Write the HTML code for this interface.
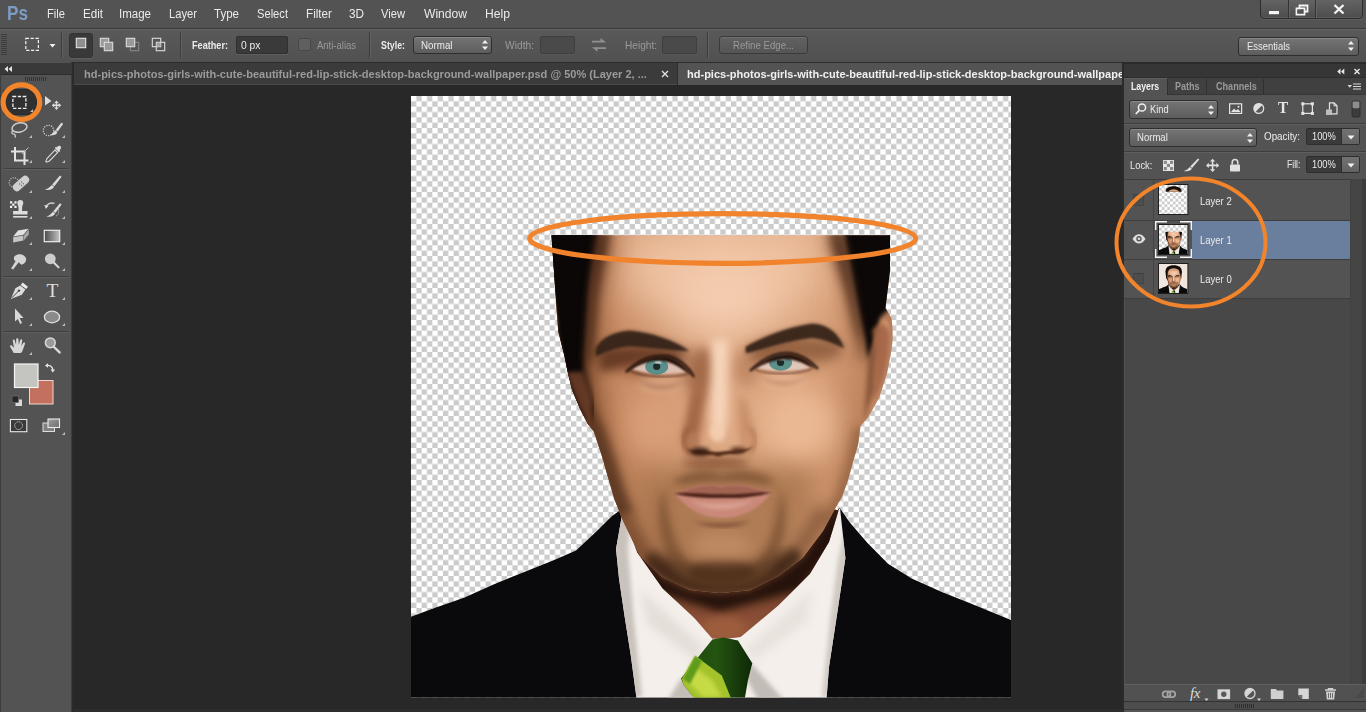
<!DOCTYPE html>
<html lang="en">
<head>
<meta charset="utf-8">
<title>Photoshop</title>
<style>
*{box-sizing:border-box;margin:0;padding:0}
html,body{width:1366px;height:712px;overflow:hidden;background:#282828}
body{position:relative;font-family:"Liberation Sans",sans-serif;font-size:12px;color:#e8e8e8}
.abs{position:absolute}
svg{position:absolute;overflow:visible}
.t{position:absolute;white-space:nowrap;line-height:1;transform-origin:0 50%}
#menubar{left:0;top:0;width:1366px;height:29px;background:#535353;border-bottom:1px solid #3a3a3a}
#optbar{left:0;top:29px;width:1366px;height:34px;background:linear-gradient(#595959,#515151);border-top:1px solid #646464;border-bottom:1px solid #2c2c2c}
#tabbar{left:74px;top:63px;width:1050px;height:22px;background:#3b3b3b;border-bottom:1px solid #4a4a4a}
#tools{left:0;top:62px;width:71px;height:650px;background:#535353}
#toolsedge{left:71px;top:62px;width:3px;height:650px;background:#2a2a2a;border-left:1.500px solid #3c3c3c}
#panel{left:1124px;top:64px;width:242px;height:648px;background:#535353}
.sel{position:absolute;border:1px solid #2e2e2e;border-radius:3px;background:linear-gradient(#747474,#5d5d5d);box-shadow:inset 0 1px 0 #8a8a8a}
.inp{position:absolute;background:#3a3a3a;border:1px solid #303030;border-radius:2px;box-shadow:0 1px 0 #5e5e5e}
.inpd{position:absolute;background:#4a4a4a;border:1px solid #3e3e3e;border-radius:2px;box-shadow:0 1px 0 #595959}
.vsep{position:absolute;width:1px;background:#3e3e3e;box-shadow:1px 0 0 #616161}
.hsep{position:absolute;height:1px;background:#3e3e3e;box-shadow:0 1px 0 #5f5f5f}
</style>
</head>
<body>

<div id="menubar" class="abs"></div>
<span class="t" style="left:7.0px;top:2.0px;font-size:21px;color:#7d9cc4;font-weight:bold;transform:scaleX(0.818);">Ps</span>
<span class="t" style="left:47.0px;top:8.3px;font-size:12.5px;color:#ebebeb;transform:scaleX(0.894);">File</span>
<span class="t" style="left:82.5px;top:8.3px;font-size:12.5px;color:#ebebeb;transform:scaleX(0.929);">Edit</span>
<span class="t" style="left:119.0px;top:8.3px;font-size:12.5px;color:#ebebeb;transform:scaleX(0.921);">Image</span>
<span class="t" style="left:169.0px;top:8.3px;font-size:12.5px;color:#ebebeb;transform:scaleX(0.896);">Layer</span>
<span class="t" style="left:214.0px;top:8.3px;font-size:12.5px;color:#ebebeb;transform:scaleX(0.923);">Type</span>
<span class="t" style="left:257.0px;top:8.3px;font-size:12.5px;color:#ebebeb;transform:scaleX(0.892);">Select</span>
<span class="t" style="left:306.0px;top:8.3px;font-size:12.5px;color:#ebebeb;transform:scaleX(0.936);">Filter</span>
<span class="t" style="left:349.0px;top:8.3px;font-size:12.5px;color:#ebebeb;transform:scaleX(0.939);">3D</span>
<span class="t" style="left:381.0px;top:8.3px;font-size:12.5px;color:#ebebeb;transform:scaleX(0.893);">View</span>
<span class="t" style="left:424.0px;top:8.3px;font-size:12.5px;color:#ebebeb;transform:scaleX(0.967);">Window</span>
<span class="t" style="left:485.0px;top:8.3px;font-size:12.5px;color:#ebebeb;transform:scaleX(0.973);">Help</span>
<div class="abs" style="left:1260px;top:-3px;width:103px;height:22px;border:1px solid #2c2c2c;border-radius:0 0 4px 4px;background:linear-gradient(#666,#4d4d4d);box-shadow:inset 0 -1px 0 #5c5c5c, 0 1px 0 #5e5e5e"></div>
<div class="abs" style="left:1288px;top:0;width:1px;height:18px;background:#333;box-shadow:1px 0 0 #666"></div>
<div class="abs" style="left:1315px;top:0;width:1px;height:18px;background:#333;box-shadow:1px 0 0 #666"></div>
<svg style="left:1260px;top:0" width="103" height="19" viewBox="1260 0 103 19"><rect x="1269" y="11" width="10" height="3.2" fill="#f4f4f4"/><path d="M1299.5 5.5h8v6h-8z M1296.5 8.5h8v6h-8z" fill="none" stroke="#f4f4f4" stroke-width="1.8"/><rect x="1297.4" y="9.4" width="6.2" height="4.2" fill="#555"/><path d="M1334.5 5 l9 8.5 M1343.5 5 l-9 8.5" stroke="#f4f4f4" stroke-width="2.3" fill="none"/></svg>
<div id="optbar" class="abs"></div>
<div class="abs" style="left:1px;top:34px;width:6px;height:22px;background:repeating-linear-gradient(#3c3c3c 0 1px,transparent 1px 2px)"></div>
<svg style="left:20px;top:32px" width="40" height="26" viewBox="20 32 40 26"><rect x="25.8" y="38.3" width="12.6" height="12" fill="none" stroke="#f2f2f2" stroke-width="1.2" stroke-dasharray="3.2 1.6"/><path d="M49.5 44 h6 l-3 3.4z" fill="#f2f2f2"/></svg>
<div class="vsep" style="left:61px;top:32px;height:26px"></div>
<div class="abs" style="left:69px;top:33px;width:24px;height:25px;background:#393939;border-radius:3px;border:1px solid #333;box-shadow:0 1px 0 #616161"></div>
<svg style="left:70px;top:32px" width="100" height="26" viewBox="70 32 100 26">
<rect x="76.3" y="38.3" width="9.4" height="9.4" fill="#8f8f8f" stroke="#e6e6e6" stroke-width="1.1"/>
<rect x="100.3" y="38.3" width="8.4" height="8.4" fill="#9a9a9a" stroke="#dcdcdc" stroke-width="1.1"/><rect x="104.3" y="42.3" width="8.4" height="8.4" fill="#9a9a9a" stroke="#dcdcdc" stroke-width="1.1"/>
<rect x="130.3" y="42.3" width="8.4" height="8.4" fill="none" stroke="#8a8a8a" stroke-width="1"/><rect x="126.3" y="38.3" width="8.4" height="8.4" fill="#9a9a9a" stroke="#dcdcdc" stroke-width="1.1"/>
<rect x="152.3" y="38.3" width="8.4" height="8.4" fill="none" stroke="#dcdcdc" stroke-width="1.1"/><rect x="156.3" y="42.3" width="8.4" height="8.4" fill="none" stroke="#dcdcdc" stroke-width="1.1"/><rect x="156.8" y="42.8" width="3.6" height="3.6" fill="#a0a0a0"/>
</svg>
<div class="vsep" style="left:180px;top:32px;height:26px"></div>
<span class="t" style="left:192.0px;top:39.5px;font-size:11px;color:#ebebeb;font-weight:bold;transform:scaleX(0.830);">Feather:</span>
<div class="inp" style="left:236px;top:36px;width:52px;height:18px"></div>
<span class="t" style="left:241.0px;top:40.0px;font-size:11px;color:#ebebeb;transform:scaleX(0.938);">0 px</span>
<div class="abs" style="left:298px;top:38px;width:13px;height:13px;background:#5f5f5f;border:1px solid #474747;border-radius:2px"></div>
<span class="t" style="left:317.0px;top:39.8px;font-size:10.5px;color:#9a9a9a;transform:scaleX(0.903);">Anti-alias</span>
<div class="vsep" style="left:369px;top:32px;height:26px"></div>
<span class="t" style="left:380.5px;top:39.5px;font-size:11px;color:#ebebeb;font-weight:bold;transform:scaleX(0.801);">Style:</span>
<div class="sel" style="left:413px;top:36px;width:79px;height:18px"></div>
<span class="t" style="left:420.5px;top:39.5px;font-size:11px;color:#ebebeb;transform:scaleX(0.889);">Normal</span>
<svg style="left:481px;top:38px" width="8" height="14" viewBox="0 0 8 14"><path d="M1 5.5 L4 2 L7 5.5z M1 8.5 L4 12 L7 8.5z" fill="#f0f0f0"/></svg>
<span class="t" style="left:505.0px;top:39.8px;font-size:10.5px;color:#9a9a9a;transform:scaleX(0.975);">Width:</span>
<div class="inpd" style="left:540px;top:36px;width:35px;height:18px"></div>
<svg style="left:590px;top:37px" width="18" height="16" viewBox="0 0 18 16"><path d="M2 3.800h8.500v-2.800l5.500 4.600h-14z M16 10.200h-14l5.500 4.600v-2.800h8.500z" fill="#909090"/></svg>
<span class="t" style="left:625.0px;top:39.8px;font-size:10.5px;color:#9a9a9a;transform:scaleX(0.962);">Height:</span>
<div class="inpd" style="left:662px;top:36px;width:35px;height:18px"></div>
<div class="vsep" style="left:707px;top:32px;height:26px"></div>
<div class="abs" style="left:719px;top:36px;width:89px;height:18px;border:1px solid #3b3b3b;border-radius:3px;background:linear-gradient(#616161,#555);box-shadow:inset 0 1px 0 #6e6e6e"></div>
<span class="t" style="left:733.0px;top:39.8px;font-size:10.5px;color:#9a9a9a;transform:scaleX(0.917);">Refine Edge...</span>
<div class="sel" style="left:1238px;top:36.5px;width:121px;height:19px"></div>
<span class="t" style="left:1246.5px;top:40.5px;font-size:11px;color:#ebebeb;transform:scaleX(0.858);">Essentials</span>
<svg style="left:1347px;top:39px" width="8" height="14" viewBox="0 0 8 14"><path d="M1 5.5 L4 2 L7 5.5z M1 8.5 L4 12 L7 8.5z" fill="#f0f0f0"/></svg>
<div id="tabbar" class="abs"></div>
<div class="abs" style="left:677px;top:63px;width:448px;height:22px;background:#535353;border-left:1px solid #2e2e2e"></div>
<span class="t" style="left:83.5px;top:68.5px;font-size:11.5px;color:#9b9b9b;font-weight:bold;transform:scaleX(0.958);">hd-pics-photos-girls-with-cute-beautiful-red-lip-stick-desktop-background-wallpaper.psd @ 50% (Layer 2, ...</span>
<svg style="left:661px;top:70px" width="8" height="8" viewBox="0 0 8 8"><path d="M1 1l6 6M7 1l-6 6" stroke="#e0e0e0" stroke-width="1.4"/></svg>
<div class="abs" style="left:686px;top:64px;width:437px;height:20px;overflow:hidden"><span class="t" style="left:1.0px;top:4.6px;font-size:11.5px;color:#f0f0f0;font-weight:bold;transform:scaleX(0.958);">hd-pics-photos-girls-with-cute-beautiful-red-lip-stick-desktop-background-wallpaper.psd @ 50% (Layer 1, RGB/8) *</span></div>
<div id="tools" class="abs"></div>
<div id="toolsedge" class="abs"></div>
<div class="abs" style="left:0;top:63px;width:72px;height:12px;background:#393939;border-bottom:1px solid #2d2d2d"></div>
<div class="abs" style="left:0;top:74px;width:1px;height:638px;background:#3c3c3c"></div>
<div class="abs" style="left:25px;top:77px;width:21px;height:4px;background:repeating-linear-gradient(90deg,#343434 0 1px,transparent 1px 2px)"></div>
<div class="abs" style="left:3px;top:89px;width:34px;height:26px;background:#303030;border-radius:3px;border:1px solid #2a2a2a"></div>
<div class="hsep" style="left:4px;top:168px;width:64px"></div>
<div class="hsep" style="left:4px;top:276px;width:64px"></div>
<div class="hsep" style="left:4px;top:331px;width:64px"></div>
<svg style="left:0;top:62px" width="74" height="650" viewBox="0 62 74 650">
<g fill="#dcdcdc" stroke="none">
<!-- collapse arrows -->
<path d="M8 66v6l-3.500-3z M12 66v6l-3.500-3z" fill="#e4e4e4"/>
<!-- corner triangles -->
<g fill="#bdbdbd">
<path d="M33 109v3h-3z"/><path d="M32 135v3h-3z M65 135v3h-3z M32 160v3h-3z M65 160v3h-3z"/>
<path d="M32 190v3h-3z M65 190v3h-3z M32 216v3h-3z M65 216v3h-3z M32 242v3h-3z M65 242v3h-3z M32 268v3h-3z M65 268v3h-3z"/>
<path d="M32 297v3h-3z M65 297v3h-3z M32 323v3h-3z M65 323v3h-3z M32 352v3h-3z M65 432v3h-3z"/>
</g>
<!-- marquee -->
<rect x="12.9" y="96.5" width="13" height="11.8" fill="none" stroke="#f0f0f0" stroke-width="1.3" stroke-dasharray="3.3 1.6"/>
<!-- move -->
<path d="M45 96l6.5 5-6.5 4.6z"/>
<path d="M56.5 100.5l2.2 2.4h-1.5v1.6h1.6v-1.5l2.4 2.2-2.4 2.2v-1.5h-1.6v1.6h1.5l-2.2 2.4-2.2-2.4h1.5v-1.6h-1.6v1.5l-2.4-2.2 2.4-2.2v1.5h1.6v-1.6h-1.5z"/>
<!-- lasso -->
<ellipse cx="19.5" cy="127.5" rx="7.6" ry="4.6" fill="none" stroke="#cfcfcf" stroke-width="1.5" transform="rotate(-12 19.5 127.5)"/>
<path d="M13.2 130.5c-1.5.6-2 2.4-.6 3.2 1.3.6 2.4 0 2.6 1.6l.2 2.2" fill="none" stroke="#cfcfcf" stroke-width="1.3"/>
<!-- quick select -->
<circle cx="48.5" cy="130.5" r="5.2" fill="none" stroke="#d4d4d4" stroke-width="1.2" stroke-dasharray="1.2 1.2"/>
<path d="M61.5 122.5l1.6 1.4-5.4 7.6-2-1.6z"/><path d="M55.3 130.3l2 1.7c-.6 2.6-3.6 3.8-7.3 3 2.4-.9 3.6-2.6 5.3-4.700z"/>
<!-- crop -->
<path d="M15 147v13.500h13.500" fill="none" stroke="#e2e2e2" stroke-width="2"/><path d="M11 151.500h13.500v13.500" fill="none" stroke="#e2e2e2" stroke-width="2"/><path d="M22 154l6.500-6.500" stroke="#bdbdbd" stroke-width="1"/>
<!-- eyedropper -->
<path d="M57.500 146.500c1.400-1.400 3.400-.6 3.600.8.200 1.200-.6 2-1.600 2.800l.8.800-1.400 1.400-4.200-4.200 1.400-1.400.8.800z"/><path d="M55 150l2.600 2.600-8.200 8.400-2.800 1.200-.8-.8 1.200-2.800z" fill="none" stroke="#dcdcdc" stroke-width="1.100"/>
<!-- healing -->
<circle cx="14" cy="182.500" r="4.800" fill="none" stroke="#c8c8c8" stroke-width="1.100" stroke-dasharray="1.100 1.200"/>
<rect x="11.500" y="179.500" width="19" height="8" rx="3.800" transform="rotate(-42 21 183.500)" fill="#cfcfcf"/>
<g fill="#6a6a6a"><circle cx="19.500" cy="184" r=".7"/><circle cx="21.500" cy="182" r=".7"/><circle cx="21.500" cy="185.500" r=".7"/><circle cx="23.300" cy="183.700" r=".7"/></g>
<!-- brush -->
<path d="M60 175.500l1.600 1.200-7.200 9.600-2.200-1.700z"/><path d="M51.800 185l2.300 1.800c-.8 2.700-4.600 3.600-9.600 2.800 3.200-.7 4.800-2.200 7.300-4.600z"/>
<g transform="translate(0,3.8)">
<!-- stamp -->
<path d="M10 197.500h2.200v2.200h-2.200z M14.400 197.500h2.200v2.200h-2.200z M12.200 199.700h2.200v2.200h-2.200z M10 201.900h2.200v2.200h-2.200z M14.400 201.900h2.200v2.200h-2.200z" fill="#f2f2f2"/>
<path d="M20.300 196.300a3 3 0 0 1 3 3c0 1.600-1.200 2.600-1.200 4.600v3.300h5.400v3.600h-14.400v-3.600h5.400v-3.300c0-2-1.200-3-1.200-4.600a3 3 0 0 1 3-3z"/><rect x="13.100" y="212.200" width="14.400" height="1.600"/>
<!-- history brush -->
<path d="M60 199.500l1.600 1.200-6.200 8.600-2.200-1.700z"/><path d="M52.800 208l2.300 1.800c-.8 2.700-4.600 3.600-8.600 2.800 3-.7 4.200-2.200 6.300-4.600z"/>
<path d="M46 203.500c.8-3.200 4.600-5.400 8.400-3.800" fill="none" stroke="#d0d0d0" stroke-width="1.500"/><path d="M44.300 201.300l4.200.6-2.600 3.400z"/>
<path d="M58 205.500c1.200 2.400.6 5-1.600 6.800" fill="none" stroke="#c0c0c0" stroke-width="1.100" stroke-dasharray="1.100 1.100"/>
</g>
<g transform="translate(0,2)">
<!-- eraser -->
<path d="M18 228.500l10.600-1.800-5.200 6-10.200 1.800z" fill="#e2e2e2"/><path d="M13.200 235.200l10.200-1.800v5.200l-10.200 2z" fill="#c6c6c6"/><path d="M24 233.200l4.800-5.800v5l-4.800 5.800z" fill="#a8a8a8"/>
</g>
<!-- gradient -->
<defs><linearGradient id="tg" x1="0" x2="1"><stop offset="0" stop-color="#4a4a4a"/><stop offset="1" stop-color="#c4c4c4"/></linearGradient>
<linearGradient id="sm" x1="0" x2="1" y1="0" y2="1"><stop offset="0" stop-color="#a0a0a0"/><stop offset="1" stop-color="#6c6c6c"/></linearGradient></defs>
<rect x="44.300" y="230.300" width="15.400" height="11.400" fill="url(#tg)" stroke="#ececec" stroke-width="1.200"/>
<g transform="translate(0,1.8)">
<!-- smudge -->
<path d="M14.500 254.500c3-3.400 9.200-2.600 11.200 1.200 1.400 3.200-.6 6.600-4.400 7.200l-2.600-2.400-5.600 7.200-2-1 4.600-7.400c-2-.8-2.400-3-1.200-4.800z" fill="#d4d4d4"/>
<!-- dodge -->
<circle cx="50.300" cy="257" r="5.400" fill="#cdcdcd"/><path d="M53.500 260.500l5.600 5.600" stroke="#dcdcdc" stroke-width="2"/>
</g>
<!-- pen -->
<path d="M22.600 282.500l5.400 4.200-1.800 2.400-5.400-4.200z" fill="#ececec"/><path d="M20.200 285.500l5.200 4-3.600 5.200-11 4.200 4.600-10.600z"/><path d="M11.600 298l7-7" stroke="#4a4a4a" stroke-width="1"/><circle cx="19" cy="290.600" r="1.200" fill="#4a4a4a"/>
<text x="52.400" y="297" font-family="Liberation Serif, serif" font-size="19.500" text-anchor="middle" fill="#dedede">T</text>
<!-- path select arrow -->
<path d="M15 308.500l8.600 9.400-4 .2 2.400 5-1.800.8-2.400-5-2.800 2.600z" fill="#d8d8d8"/>
<!-- ellipse -->
<ellipse cx="52" cy="317" rx="7.600" ry="5.800" fill="#8a8a8a" stroke="#e0e0e0" stroke-width="1.300"/>
<!-- hand -->
<path d="M13.800 353l-3.600-6c-.8-1.400.8-2.200 1.800-1.200l2 2-1.200-7c-.2-1.400 1.600-1.600 2-.4l1.200 4.400.2-5.600c0-1.400 2-1.400 2.200 0l.4 5.400 1.400-4.600c.4-1.200 2.200-.8 2 .6l-.8 5.400 1.800-3c.6-1 2.200-.4 1.800.8l-2.400 6.800c-.6 1.600-1.200 2-1.800 2.400z" fill="#d6d6d6"/>
<!-- zoom -->
<circle cx="50.300" cy="342.800" r="4.900" fill="#9a9a9a" stroke="#dadada" stroke-width="1.500"/><path d="M54 347l5.600 5.400" stroke="#dcdcdc" stroke-width="2.400" stroke-linecap="round"/>
<!-- swatches -->
<rect x="29.500" y="380.500" width="23.500" height="23.500" fill="#c4705e" stroke="#f0d8d0" stroke-width="1"/>
<rect x="14.500" y="364" width="23.500" height="23.500" fill="#c4c5c0" stroke="#f6f6f6" stroke-width="1.200"/>
<path d="M47 365.500c3.400-.4 5.800 1.600 5.800 4.800" fill="none" stroke="#e6e6e6" stroke-width="1.300"/><path d="M45 365.500l3-2.200v4.400z M52.800 372.500l-2.200-3h4.400z" fill="#e6e6e6"/>
<rect x="15.500" y="399.500" width="6.500" height="6.500" fill="#d8d8d8"/><rect x="12" y="396" width="6.500" height="6.500" fill="#262626" stroke="#6a6a6a" stroke-width=".8"/>
<!-- quick mask -->
<rect x="10.400" y="419.500" width="16.400" height="12.200" fill="#3a3a3a" stroke="#e8e8e8" stroke-width="1.100"/><circle cx="18.600" cy="425.600" r="3.900" fill="none" stroke="#e8e8e8" stroke-width="1" stroke-dasharray="1 1"/>
<!-- screen mode -->
<rect x="43" y="423" width="11.500" height="8.500" fill="#808080" stroke="#dedede" stroke-width="1"/><rect x="48" y="419" width="11.500" height="8.500" fill="url(#sm)" stroke="#ececec" stroke-width="1.100"/>
</g>
</svg>

<svg style="left:411px;top:96px" width="600" height="602" viewBox="411 96 600 602">
<defs>
<pattern id="chk" x="411" y="96" width="10.6667" height="10.6667" patternUnits="userSpaceOnUse"><rect width="10.6667" height="10.6667" fill="#fff"/><rect x="5.3333" y="0" width="5.3334" height="5.3333" fill="#cbcbcb"/><rect x="0" y="5.3333" width="5.3333" height="5.3334" fill="#cbcbcb"/></pattern>
<clipPath id="cv"><rect x="411" y="96" width="600" height="601.500"/></clipPath>
<filter id="b1" color-interpolation-filters="sRGB" x="-20%" y="-20%" width="140%" height="140%"><feGaussianBlur stdDeviation="1"/></filter>
<filter id="b2" color-interpolation-filters="sRGB" x="-30%" y="-30%" width="160%" height="160%"><feGaussianBlur stdDeviation="2.2"/></filter>
<filter id="b4" color-interpolation-filters="sRGB" x="-40%" y="-40%" width="180%" height="180%"><feGaussianBlur stdDeviation="4"/></filter>
<filter id="b7" color-interpolation-filters="sRGB" x="-50%" y="-50%" width="200%" height="200%"><feGaussianBlur stdDeviation="7"/></filter>
<filter id="b12" color-interpolation-filters="sRGB" x="-60%" y="-60%" width="220%" height="220%"><feGaussianBlur stdDeviation="12"/></filter>
<filter id="b20" color-interpolation-filters="sRGB" x="-80%" y="-80%" width="260%" height="260%"><feGaussianBlur stdDeviation="20"/></filter>
<path id="head" d="M551.5 235.300L890 235.300L890 271L885.500 308L891.500 318C893 330 893 340 891.500 349L887 373.500L879 398L868.300 417L860.500 426L858 445L853 462L848 480L842 497L836.500 506L823 531L802.600 558L779 575.500L749.500 590.300L720 593L690 590L662 577L640 556L623 521L614 498L607.700 476.300L601.500 454.700L593.800 431.500L587.600 423.700L579.800 408.300L572 389.700L567.500 371L564.400 355.700L558.200 331L556 300L553 257Z"/>
<clipPath id="hc"><use href="#head"/></clipPath>
<path id="shirt" d="M622 515L616 549L619 578.500L624.700 617L630.700 655L636.600 699L826.500 699L829 667L838 608L845.400 558L840 508L800 560L660 560Z"/>
<clipPath id="sc"><use href="#shirt"/></clipPath>
<path id="neckp" d="M624.700 519L637.400 552.700L662.700 588.500L694.300 618L712.300 638.500L723.700 639L740.600 637L778.600 605.300L810 573.700L829 542L838.600 510.500L800 500L660 500Z"/>
<clipPath id="nc"><use href="#neckp"/></clipPath>
<linearGradient id="skin" x1="0" x2="1" y1="0" y2="0"><stop offset="0" stop-color="#9a6240"/><stop offset=".2" stop-color="#c88c64"/><stop offset=".5" stop-color="#e2ae8a"/><stop offset=".8" stop-color="#d79f78"/><stop offset="1" stop-color="#b27852"/></linearGradient>
<linearGradient id="tie" x1="0" x2="1" y1="0" y2="0"><stop offset="0" stop-color="#1e480e"/><stop offset=".5" stop-color="#245410"/><stop offset="1" stop-color="#0e2806"/></linearGradient>
<linearGradient id="neck" x1="0" x2="0" y1="0" y2="1"><stop offset="0" stop-color="#3a1e12"/><stop offset=".5" stop-color="#6a3824"/><stop offset="1" stop-color="#96583c"/></linearGradient>
</defs>
<rect x="411" y="96" width="600" height="601.500" fill="url(#chk)"/>
<g id="portrait" clip-path="url(#cv)">
<path d="M621.800 509L611.500 516.500L596.700 531.300L576 550.500L552.500 560.800L523 572.600L493.500 584.400L464 597.700L434.500 608L411 616.800L411 699L1011 699L1011 620L970.700 603.600L941.200 591.800L911.700 578.500L888 563.700L867.500 543L849.800 522.400L839.500 507.700L800 560L650 560Z" fill="#0a090c"/>
<use href="#shirt" fill="#f4efeb"/>
<g clip-path="url(#sc)">
<path d="M614 515L614 549L616 580L622 620L630 665L634 697L642 697L634 620L628 550L630 520Z" fill="#c9c2bc" filter="url(#b2)"/>
<path d="M848 515L848 558L842 608L832 670L828 697L822 697L830 620L838 560Z" fill="#cfc8c2" filter="url(#b2)"/>
<path d="M680 680L668 700L704 700L692 676Z" fill="#c4beb8" filter="url(#b2)"/>
<path d="M750 662L784 700L758 700L746 678Z" fill="#c2bcb6" filter="url(#b2)"/>
<path d="M640 590L705 648L695 660L648 625Z" fill="#e4ded8" filter="url(#b4)"/>
<path d="M812 590L745 650L755 660L806 622Z" fill="#e8e2dc" filter="url(#b4)"/>
</g>
<use href="#neckp" fill="url(#neck)"/>
<g clip-path="url(#nc)">
<path d="M624 515L640 556L662 577L690 590L720 593L750 590L779 575L803 558L838 506L838 540L800 590L720 612L650 590L620 540Z" fill="#1c0e08" filter="url(#b4)" opacity=".9"/>
<ellipse cx="724" cy="628" rx="22" ry="12" fill="#a0603f" filter="url(#b4)" opacity=".8"/>
</g>
<path d="M712.300 639.500L723.500 637.500L738 640.400L752.300 663.300L748 680L744.700 699L695 699L683.700 685L681 678.500Z" fill="url(#tie)"/>
<path d="M695.200 655.700L721.800 675.600L731.300 699L695 699L683.700 685L681.800 679Z" fill="#a4c22a"/>
<path d="M690 664L712 680L722 697L703 697L688 682Z" fill="#c6da46" filter="url(#b2)"/>
<path d="M683 679L695.200 655.700L702 661L690 684Z" fill="#5e9a1c" filter="url(#b1)"/>
<use href="#head" fill="url(#skin)"/>
<g clip-path="url(#hc)">
<rect x="620" y="225" width="200" height="80" fill="#f0c4a4" filter="url(#b20)" opacity=".9"/>
<ellipse cx="722" cy="300" rx="60" ry="36" fill="#f6d2b6" filter="url(#b20)" opacity=".8"/>
<rect x="590" y="460" width="270" height="160" fill="#b98258" filter="url(#b20)" opacity=".4"/>
<ellipse cx="652" cy="425" rx="26" ry="28" fill="#dba27c" filter="url(#b12)" opacity=".8"/>
<ellipse cx="798" cy="425" rx="36" ry="36" fill="#ecba96" filter="url(#b12)" opacity=".95"/>
<path d="M545 235L612 235L596 300L592 370L604 430L630 520L665 580L600 560L540 400Z" fill="#7e4a2c" filter="url(#b12)" opacity=".85"/>
<path d="M545 235L604 235L590 300L586 370L590 420L560 400Z" fill="#3a2014" filter="url(#b7)" opacity=".8"/>
<path d="M846 360L866 420L850 480L830 530L790 575L850 540L880 440Z" fill="#95603e" filter="url(#b12)" opacity=".7"/>
<path d="M826 235L850 235L862 300L870 360L860 360L848 300Z" fill="#6a4028" filter="url(#b7)" opacity=".75"/>
<ellipse cx="640" cy="358" rx="46" ry="15" fill="#80492f" filter="url(#b7)" opacity=".9"/>
<path d="M600 352C620 346 660 350 688 354C680 362 660 358 640 360C620 364 606 372 600 372Z" fill="#5a3420" filter="url(#b4)" opacity=".75"/>
<path d="M750 352C780 342 815 338 842 348C838 358 820 352 800 352C780 354 764 360 752 364Z" fill="#6e442c" filter="url(#b4)" opacity=".65"/>
<ellipse cx="795" cy="352" rx="46" ry="14" fill="#94603f" filter="url(#b7)" opacity=".85"/>
<ellipse cx="698" cy="372" rx="14" ry="24" fill="#9a6242" filter="url(#b7)" opacity=".8"/>
<ellipse cx="746" cy="368" rx="12" ry="20" fill="#b07552" filter="url(#b7)" opacity=".65"/>
<ellipse cx="660" cy="385" rx="22" ry="7" fill="#dea888" filter="url(#b4)" opacity=".7"/>
<ellipse cx="785" cy="381" rx="22" ry="7" fill="#e8b696" filter="url(#b4)" opacity=".7"/>
<path d="M712 340L728 340L727 420L722 440L714 440L711 420Z" fill="#f8d9c0" filter="url(#b4)" opacity=".9"/>
<path d="M692 395L703 390L700 430L688 452L682 440Z" fill="#9c6040" filter="url(#b4)" opacity=".85"/>
<path d="M738 395L746 400L756 440L748 452L740 430Z" fill="#bb805a" filter="url(#b4)" opacity=".7"/>
<path d="M700 350L708 350L704 400L696 430L686 440L690 410Z" fill="#a06644" filter="url(#b4)" opacity=".7"/>
<ellipse cx="692" cy="442" rx="8" ry="10" fill="#b47a56" filter="url(#b2)" opacity=".8"/>
<ellipse cx="748" cy="441" rx="7" ry="10" fill="#cf9670" filter="url(#b2)" opacity=".8"/>
<ellipse cx="717" cy="432" rx="7" ry="9" fill="#f4cdb0" filter="url(#b2)" opacity=".9"/>
<path d="M688 428C682 436 682 448 690 455" fill="none" stroke="#8a5236" stroke-width="3" filter="url(#b2)" opacity=".8"/>
<path d="M750 428C757 436 757 447 749 454" fill="none" stroke="#a8704c" stroke-width="2.500" filter="url(#b2)" opacity=".8"/>
<path d="M686 448C695 458 708 452 718 457C730 452 745 456 753 446C745 452 730 450 718 452C706 450 695 454 686 448Z" fill="#4a2616" filter="url(#b1)"/>
<ellipse cx="700" cy="452" rx="10" ry="4.500" fill="#32180e" filter="url(#b2)" opacity=".95"/>
<ellipse cx="738" cy="450.500" rx="8" ry="3.500" fill="#4a2616" filter="url(#b2)" opacity=".85"/>
<ellipse cx="716" cy="463" rx="34" ry="6" fill="#7e4a2e" filter="url(#b4)" opacity=".8"/>
<path d="M640 470C660 470 690 468 722 470C750 468 790 466 812 470C815 510 800 550 770 578C745 592 700 593 672 580C645 556 630 510 640 470Z" fill="#96643e" filter="url(#b12)" opacity=".55"/>
<path d="M672 482C690 470 705 468 722 474C740 468 760 470 775 482C770 488 760 480 722 482C690 480 680 488 672 482Z" fill="#6e4628" filter="url(#b4)" opacity=".75"/>
<path d="M648 556C660 570 668 575 680 581C704 592 742 593 766 579C778 572 788 564 798 552" fill="none" stroke="#1e100a" stroke-width="13" filter="url(#b4)" opacity=".9"/>
<path d="M622 510C636 548 652 566 675 578C700 592 742 593 768 578C792 562 808 540 824 508" fill="none" stroke="#6a4228" stroke-width="16" filter="url(#b7)" opacity=".6"/>
<path d="M660 560C690 582 750 584 786 556" fill="none" stroke="#3a2214" stroke-width="14" filter="url(#b7)" opacity=".8"/>
<path d="M664 488C668 520 676 548 690 566C710 580 735 580 755 566C770 548 778 520 780 488C790 510 786 550 768 574C745 590 700 590 678 574C658 550 654 510 664 488Z" fill="#6a4428" filter="url(#b4)" opacity=".6"/>
<ellipse cx="722" cy="572" rx="34" ry="12" fill="#4a2c18" filter="url(#b4)" opacity=".7"/>
<ellipse cx="722" cy="545" rx="30" ry="12" fill="#c4906a" filter="url(#b7)" opacity=".7"/>
<path d="M675 494C695 486 710 483 722 487C734 483 750 486 771 493C757 512 738 518 722 518C705 518 690 512 675 494Z" fill="#c98878" filter="url(#b1)"/>
<path d="M675 494C695 486 710 483 722 487C734 483 750 486 771 493C750 496 700 497 675 494Z" fill="#9c5e4c" filter="url(#b1)" opacity=".85"/>
<path d="M690 500C705 512 740 512 756 498C745 506 700 506 690 500Z" fill="#e0aa9c" filter="url(#b2)"/>
<path d="M674 493.500C695 492 708 495 722 494C738 495 752 492 772 492.500C752 497.500 738 498.500 722 498C706 498.500 692 497.500 674 493.500Z" fill="#4a2218" filter="url(#b1)"/>
<path d="M692 521C710 529 736 529 752 520C740 525 705 525 692 521Z" fill="#70422c" filter="url(#b2)"/>
<path d="M596 350C600 338 615 332 630 331C652 333 672 340 689 351C670 350 650 347 630 346C615 347 604 352 596 356Z" fill="#33221a" filter="url(#b1)" opacity=".9"/>
<path d="M596 350C600 338 615 332 630 331C652 333 672 340 689 351C670 350 650 347 630 346C615 347 604 352 596 356Z" fill="#3a261a" filter="url(#b2)" opacity=".7"/>
<path d="M746 347C765 336 790 327 812 324C827 324 838 333 844 348C834 343 825 339 812 337.500C790 340 768 347 746 353Z" fill="#38261c" filter="url(#b1)" opacity=".9"/>
<path d="M746 347C765 336 790 327 812 324C827 324 838 333 844 348C834 343 825 339 812 337.500C790 340 768 347 746 353Z" fill="#3a261a" filter="url(#b2)" opacity=".7"/>
<path d="M632 369C642 360 655 357 668 360C676 363 682 368 686 372C675 374 650 376 632 369Z" fill="#dcc0b2" filter="url(#b1)"/>
<path d="M757 368C765 360 776 356 790 357C800 359 806 364 810 368C795 372 772 372 757 368Z" fill="#e2c6b8" filter="url(#b1)"/>
<ellipse cx="656.700" cy="366.500" rx="11.500" ry="8.200" fill="#5a8e8a"/><circle cx="656.700" cy="366.500" r="3.600" fill="#1c2a2a"/>
<ellipse cx="780.500" cy="362.500" rx="11.500" ry="8.200" fill="#5c918a"/><circle cx="780.500" cy="362.500" r="3.600" fill="#1c2a2a"/>
<rect x="655" y="361" width="6" height="2.400" fill="#fff" filter="url(#b1)"/><rect x="779" y="357.500" width="6" height="2.400" fill="#fff" filter="url(#b1)"/>
<path d="M626 372C640 360 652 355 668 357C678 360 686 366 692 376C680 367 672 362 662 361C650 360 640 364 626 372Z" fill="#26140c" filter="url(#b1)"/>
<path d="M751 371C762 360 775 353 790 354C802 356 810 362 816 369C805 364 798 360 788 359.500C776 359 764 363 751 371Z" fill="#2a160e" filter="url(#b1)"/>
<path d="M630 371C645 378 672 378 688 374" fill="none" stroke="#5a3424" stroke-width="1.600" filter="url(#b1)" opacity=".8"/>
<path d="M755 370C770 375 795 375 812 369" fill="none" stroke="#6a4030" stroke-width="1.600" filter="url(#b1)" opacity=".8"/>
<path d="M626 372C640 359 652 354 668 356C680 359 688 366 694 377" fill="none" stroke="#2a160e" stroke-width="2.400" filter="url(#b1)"/>
<path d="M750 371C762 359 775 352 790 353C803 355 811 361 818 369" fill="none" stroke="#2e1a12" stroke-width="2.400" filter="url(#b1)"/>
<path d="M636 378C650 388 672 388 686 380C672 392 648 392 636 378Z" fill="#a06c50" filter="url(#b2)" opacity=".8"/>
<path d="M760 376C775 384 795 384 808 376C795 388 772 388 760 376Z" fill="#b07a5e" filter="url(#b2)" opacity=".7"/>
<path d="M566 372L580 408L594 432L602 455L610 480L622 515" fill="none" stroke="#50301c" stroke-width="22" filter="url(#b4)" opacity=".75"/>
<path d="M566 330L572 372L580 398L586 410" fill="none" stroke="#160d09" stroke-width="20" stroke-linecap="round" filter="url(#b4)" opacity=".9"/>
<path d="M860 428L853 462L842 497L826 526" fill="none" stroke="#8a5a3c" stroke-width="14" filter="url(#b4)" opacity=".55"/>
<path d="M545 230L600 230C592 260 589 280 588 300L586 331L583 362L578 388L566 372L556 300Z" fill="#0d0908" filter="url(#b2)"/>
<path d="M545 230L594 230C586 262 584 280 582 300L580 331L577 360L570 374L556 300Z" fill="#0a0706" filter="url(#b1)"/>
<path d="M596 230L612 230C602 262 598 290 596 320L592 360L584 362L588 300Z" fill="#4a2a1a" filter="url(#b4)" opacity=".75"/>
<path d="M843 230L895 230L895 271L890 308L880 318L868.300 360L865 340L860 317.800L854 287L848 256Z" fill="#0c0807" filter="url(#b2)"/>
<path d="M828 230L844 230L852 270L860 318L866 350L856 330L846 290L838 262Z" fill="#4a2c1c" filter="url(#b4)" opacity=".7"/>
<path d="M882 320C890 318 892 330 891 349L886 374L878 398L868 416C876 392 880 360 882 320Z" fill="#d69c7a" filter="url(#b2)" opacity=".85"/>
<path d="M872 330C880 322 888 322 890 335C890 360 884 385 872 405C876 380 878 350 872 330Z" fill="#a06244" filter="url(#b2)" opacity=".85"/>
<path d="M868 360L876 340L874 390L864 420Z" fill="#7a4830" filter="url(#b2)" opacity=".7"/>
<path d="M566 372L580 408L592 430L592 400L582 372Z" fill="#70402a" filter="url(#b2)" opacity=".85"/>
</g>
</g>
<ellipse cx="722.700" cy="238.500" rx="193" ry="24.800" fill="none" stroke="#f0832c" stroke-width="5.200"/>
</svg>

<div id="panel" class="abs"></div>
<div class="abs" style="left:1122px;top:63px;width:2px;height:649px;background:#2b2b2b"></div>
<div class="abs" style="left:1124px;top:63px;width:242px;height:15px;background:#363636;border-top:1px solid #2a2a2a;border-bottom:1px solid #2d2d2d"></div>
<div class="abs" style="left:1124px;top:78px;width:242px;height:17px;background:#404040;border-bottom:1px solid #363636"></div>
<div class="abs" style="left:1124px;top:78px;width:44px;height:17px;background:#535353;border-right:1px solid #2f2f2f;border-top:1px solid #5f5f5f"></div>
<div class="abs" style="left:1206px;top:79px;width:1px;height:15px;background:#303030"></div>
<div class="abs" style="left:1263px;top:79px;width:1px;height:15px;background:#303030"></div>
<span class="t" style="left:1131.3px;top:81.2px;font-size:10.5px;color:#f2f2f2;font-weight:bold;transform:scaleX(0.833);">Layers</span>
<span class="t" style="left:1174.5px;top:81.2px;font-size:10.5px;color:#9a9a9a;font-weight:bold;transform:scaleX(0.860);">Paths</span>
<span class="t" style="left:1215.5px;top:81.2px;font-size:10.5px;color:#9a9a9a;font-weight:bold;transform:scaleX(0.865);">Channels</span>
<svg style="left:1330px;top:64px" width="36" height="32" viewBox="1330 64 36 32">
<path d="M1340.500 68.500v6l-3.300-3z M1344.300 68.500v6l-3.300-3z" fill="#e8e8e8"/>
<path d="M1354.500 69l5 5M1359.500 69l-5 5" stroke="#e8e8e8" stroke-width="1.400"/>
<path d="M1347.500 85h4.600l-2.300 2.800z" fill="#d8d8d8"/><path d="M1353 84h8M1353 86.500h8M1353 89h8" stroke="#d8d8d8" stroke-width="1.100"/>
</svg>
<div class="sel" style="left:1128.500px;top:100px;width:89px;height:19px"></div>
<svg style="left:1134px;top:102px" width="14" height="14" viewBox="0 0 14 14"><circle cx="8" cy="5.500" r="3.600" fill="none" stroke="#f0f0f0" stroke-width="1.500"/><path d="M5.400 8.200l-3.600 3.800" stroke="#f0f0f0" stroke-width="1.800"/></svg>
<span class="t" style="left:1150.4px;top:104.0px;font-size:11px;color:#ebebeb;transform:scaleX(0.845);">Kind</span>
<svg style="left:1207px;top:102.500px" width="8" height="14" viewBox="0 0 8 14"><path d="M1 5.500 L4 2 L7 5.500z M1 8.500 L4 12 L7 8.500z" fill="#f0f0f0"/></svg>
<svg style="left:1224px;top:98px" width="142" height="24" viewBox="1224 98 142 24">
<rect x="1229.600" y="103.800" width="12" height="9.600" fill="none" stroke="#e4e4e4" stroke-width="1.200"/><path d="M1231 112l3-3.600 2 2 2-1.400 2.600 3z" fill="#e4e4e4"/><circle cx="1238.500" cy="106.800" r="1" fill="#e4e4e4"/>
<circle cx="1258.800" cy="108.500" r="4.900" fill="#5a5a5a" stroke="#e0e0e0" stroke-width="1.200"/><path d="M1262.300 105a4.900 4.900 0 0 0-7 7z" fill="#e0e0e0"/>
<rect x="1302.800" y="103.800" width="9.600" height="9.600" fill="none" stroke="#e4e4e4" stroke-width="1.200"/><g fill="#e4e4e4"><rect x="1301.300" y="102.300" width="3" height="3"/><rect x="1310.900" y="102.300" width="3" height="3"/><rect x="1301.300" y="111.900" width="3" height="3"/><rect x="1310.900" y="111.900" width="3" height="3"/></g>
<path d="M1329.500 102.800h4.500l3 3v8h-7.500z" fill="none" stroke="#e4e4e4" stroke-width="1.200"/><path d="M1334 102.800v3h3" fill="none" stroke="#e4e4e4" stroke-width="1"/><rect x="1326" y="109.500" width="6" height="5.500" fill="#bdbdbd"/>
<rect x="1352" y="101" width="8" height="16" rx="1.500" fill="#3c3c3c" stroke="#2c2c2c" stroke-width=".8"/><rect x="1352.600" y="101.600" width="6.800" height="6.600" rx="1" fill="#8c8c8c"/>
</svg>
<span class="t" style="left:1278px;top:99.500px;font-family:'Liberation Serif',serif;font-weight:bold;font-size:16px;color:#e6e6e6;transform:scaleX(.95)">T</span>
<div class="hsep" style="left:1124px;top:123px;width:242px"></div>
<div class="sel" style="left:1128.500px;top:128px;width:128px;height:19px"></div>
<span class="t" style="left:1136.5px;top:132.0px;font-size:11px;color:#ebebeb;transform:scaleX(0.869);">Normal</span>
<svg style="left:1245.500px;top:130.500px" width="8" height="14" viewBox="0 0 8 14"><path d="M1 5.500 L4 2 L7 5.500z M1 8.500 L4 12 L7 8.500z" fill="#f0f0f0"/></svg>
<span class="t" style="left:1264.0px;top:130.5px;font-size:11px;color:#ebebeb;transform:scaleX(0.892);">Opacity:</span>
<div class="abs" style="left:1306px;top:127.5px;width:54px;height:17.500px;background:#3a3a3a;border:1px solid #2e2e2e;border-radius:2px"></div>
<div class="abs" style="left:1341px;top:128.5px;width:18px;height:15.500px;background:linear-gradient(#727272,#626262);border-left:1px solid #2e2e2e"></div>
<svg style="left:1346.500px;top:134.5px" width="8" height="5" viewBox="0 0 8 5"><path d="M.5 .5h7l-3.500 4z" fill="#f2f2f2"/></svg>
<div class="abs" style="left:1306px;top:155.5px;width:54px;height:17.500px;background:#3a3a3a;border:1px solid #2e2e2e;border-radius:2px"></div>
<div class="abs" style="left:1341px;top:156.5px;width:18px;height:15.500px;background:linear-gradient(#727272,#626262);border-left:1px solid #2e2e2e"></div>
<svg style="left:1346.500px;top:162.5px" width="8" height="5" viewBox="0 0 8 5"><path d="M.5 .5h7l-3.500 4z" fill="#f2f2f2"/></svg>
<span class="t" style="left:1311.7px;top:131.3px;font-size:11px;color:#ebebeb;transform:scaleX(0.846);">100%</span>
<span class="t" style="left:1311.7px;top:159.3px;font-size:11px;color:#ebebeb;transform:scaleX(0.846);">100%</span>
<div class="hsep" style="left:1124px;top:151px;width:242px"></div>
<span class="t" style="left:1130.4px;top:160.0px;font-size:11px;color:#ebebeb;transform:scaleX(0.848);">Lock:</span>
<span class="t" style="left:1286.6px;top:159.0px;font-size:11px;color:#ebebeb;transform:scaleX(0.783);">Fill:</span>
<svg style="left:1160px;top:156px" width="84" height="20" viewBox="1160 156 84 20">
<rect x="1163" y="160" width="11" height="11" fill="#e8e8e8"/><g fill="#8a8a8a"><rect x="1163.800" y="160.800" width="3.100" height="3.100"/><rect x="1170" y="160.800" width="3.100" height="3.100"/><rect x="1166.900" y="163.900" width="3.100" height="3.100"/><rect x="1163.800" y="167" width="3.100" height="3.100"/><rect x="1170" y="167" width="3.100" height="3.100"/></g>
<path d="M1198 158.500l1.300 1-7.200 8.600-1.900-1.500z" fill="#e0e0e0"/><path d="M1189.800 167l2 1.600c-.8 2.400-4 3.200-8.400 2.500 2.800-.6 4.200-1.900 6.400-4.100z" fill="#e0e0e0"/>
<path d="M1212.600 158.800l2.600 2.800h-1.800v3h3v-1.800l2.800 2.600-2.800 2.600v-1.800h-3v3h1.800l-2.600 2.800-2.600-2.800h1.800v-3h-3v1.800l-2.800-2.600 2.800-2.600v1.800h3v-3h-1.800z" fill="#e0e0e0"/>
<rect x="1230" y="164.500" width="10" height="7" rx=".8" fill="#e0e0e0"/><path d="M1232.200 164.500v-2.200a2.800 2.800 0 0 1 5.600 0v2.200" fill="none" stroke="#e0e0e0" stroke-width="1.500"/>
</svg>
<div class="abs" style="left:1124px;top:179px;width:226px;height:1px;background:#3c3c3c"></div>
<div class="abs" style="left:1124px;top:299px;width:226px;height:385px;background:#484848;border-left:1.500px solid #525252"></div>
<div class="abs" style="left:1350px;top:179px;width:16px;height:505px;background:#454545;border-left:1px solid #404040;border-right:4px solid #3c3c3c"></div>
<div class="abs" style="left:1191.500px;top:220px;width:158.500px;height:38.500px;background:#6a7f9d"></div>
<div class="abs" style="left:1124px;top:219.5px;width:226px;height:1px;background:#3e3e3e"></div>
<div class="abs" style="left:1124px;top:258.5px;width:226px;height:1px;background:#3e3e3e"></div>
<div class="abs" style="left:1124px;top:298px;width:226px;height:1px;background:#3e3e3e"></div>
<div class="abs" style="left:1153px;top:180px;width:1px;height:118px;background:#444"></div>
<span class="t" style="left:1200.3px;top:196.2px;font-size:11px;color:#ebebeb;transform:scaleX(0.864);">Layer 2</span>
<span class="t" style="left:1200.3px;top:235.3px;font-size:11px;color:#ebebeb;transform:scaleX(0.864);">Layer 1</span>
<span class="t" style="left:1200.3px;top:274.3px;font-size:11px;color:#ebebeb;transform:scaleX(0.864);">Layer 0</span>
<div class="abs" style="left:1132.500px;top:194px;width:11.500px;height:11.500px;background:#4d4d4d;border:1px solid #454545;border-top-color:#3e3e3e"></div>
<div class="abs" style="left:1132.500px;top:272.5px;width:11.500px;height:11.500px;background:#4d4d4d;border:1px solid #454545;border-top-color:#3e3e3e"></div>
<svg style="left:1131px;top:232px" width="16" height="14" viewBox="0 0 16 14"><path d="M1.500 7c2-3.600 4.400-4.800 6.500-4.800s4.500 1.200 6.500 4.800c-2 3.400-4.400 4.400-6.500 4.400s-4.500-1-6.500-4.400z" fill="#dedede"/><circle cx="8" cy="6.800" r="2.700" fill="#555"/><circle cx="8" cy="6.800" r="1.300" fill="#dedede"/></svg>
<svg style="left:1157.6px;top:184.3px" width="30.400" height="31" viewBox="0 0 30.400 31"><rect width="30.400" height="31" fill="#1e1e1e"/><svg x="1" y="1" width="28.400" height="29" viewBox="0 0 28.800 29.400" style="overflow:hidden"><defs><pattern id="chk2" width="5.600" height="5.600" patternUnits="userSpaceOnUse"><rect width="5.600" height="5.600" fill="#fff"/><rect x="2.800" width="2.800" height="2.800" fill="#ccc"/><rect y="2.800" width="2.800" height="2.800" fill="#ccc"/></pattern></defs><rect width="30" height="30" fill="url(#chk2)"/><g transform="scale(0.04900) translate(-417,-96)"><path d="M556 236C548 170 610 122 720 122C830 122 892 170 886 236Z" fill="#140d0a"/><path d="M612 236C620 200 680 180 722 182C770 182 820 200 836 236Z" fill="#d8a47e"/></g></svg></svg>
<svg style="left:1157.6px;top:223.8px" width="30.400" height="31" viewBox="0 0 30.400 31"><rect width="30.400" height="31" fill="#1e1e1e"/><svg x="1" y="1" width="28.400" height="29" viewBox="0 0 28.800 29.400" style="overflow:hidden"><rect width="30" height="30" fill="url(#chk2)"/><g transform="scale(0.04900) translate(-417,-96)"><use href="#portrait"/></g></svg></svg>
<svg style="left:1157.6px;top:262.7px" width="30.400" height="31" viewBox="0 0 30.400 31"><rect width="30.400" height="31" fill="#1e1e1e"/><svg x="1" y="1" width="28.400" height="29" viewBox="0 0 28.800 29.400" style="overflow:hidden"><rect width="30" height="30" fill="#f1e6de"/><g transform="scale(0.04900) translate(-417,-96)"><use href="#portrait"/><path d="M556 240C548 170 610 122 720 122C830 122 892 170 886 240Z" fill="#140d0a"/><path d="M612 240C620 200 680 180 722 182C770 182 820 200 836 240Z" fill="#d8a47e"/></g></svg></svg>
<svg style="left:1154.600px;top:220.800px" width="37" height="37" viewBox="0 0 37 37"><path d="M.7 9V.7H12M25 .7H36.300V9M36.300 28V36.300H25M12 36.300H.7V28" fill="none" stroke="#f4f4f4" stroke-width="1.400"/></svg>
<div class="abs" style="left:1124px;top:684px;width:242px;height:18px;background:#515151;border-top:1px solid #606060;border-bottom:1px solid #333"></div>
<div class="abs" style="left:1124px;top:702px;width:242px;height:8px;background:#4d4d4d;border-bottom:1px solid #383838"></div>
<div class="abs" style="left:1124px;top:710px;width:242px;height:2px;background:#565656"></div>
<div class="abs" style="left:1235px;top:704px;width:20px;height:4px;background:repeating-linear-gradient(90deg,#2f2f2f 0 1px,transparent 1px 2px)"></div>
<svg style="left:1156px;top:685px" width="210" height="18" viewBox="1156 685 210 18">
<g fill="none" stroke="#a4a4a4" stroke-width="1.700"><rect x="1162.600" y="691.300" width="7.800" height="5.800" rx="2.900"/><rect x="1167.400" y="691.300" width="7.800" height="5.800" rx="2.900"/></g>
<rect x="1217.500" y="689.300" width="12.600" height="9.800" fill="#d6d6d6"/><circle cx="1223.800" cy="694.200" r="2.700" fill="#5a5a5a"/>
<circle cx="1250" cy="693.500" r="5" fill="#555" stroke="#d6d6d6" stroke-width="1.300"/><path d="M1253.600 690a5 5 0 0 0-7.200 7z" fill="#d6d6d6"/><path d="M1257 698.500h4l-2 2.400z" fill="#d6d6d6"/>
<path d="M1270.800 689h5l1.200 1.600h6.400v8.400h-12.600z" fill="#d0d0d0"/>
<path d="M1298.300 688.500h10.500v10.500h-6.500l-4-4z" fill="#d6d6d6"/><path d="M1298.300 695h4v4z" fill="#6a6a6a"/>
<path d="M1325 690h11M1328.500 690v-1.300h4v1.300" fill="none" stroke="#d0d0d0" stroke-width="1.300"/><path d="M1326 691.500h9l-.8 8h-7.400z" fill="#d0d0d0"/><path d="M1328.500 693v5M1330.500 693v5M1332.500 693v5" stroke="#555" stroke-width=".8"/>
<path d="M1204.500 698.500h4l-2 2.400z" fill="#d6d6d6"/>
<path d="M1364 690l-8 8M1364 693l-5 5M1364 696l-2 2" stroke="#3c3c3c" stroke-width="1"/>
</svg>
<span class="t" style="left:1190px;top:685.500px;font-family:'Liberation Serif',serif;font-style:italic;font-size:15px;color:#dcdcdc;letter-spacing:-.5px">fx</span>

<svg style="left:0;top:0" width="1366" height="712" viewBox="0 0 1366 712">
<ellipse cx="21.400" cy="102.200" rx="18.300" ry="17.300" fill="none" stroke="#f2842b" stroke-width="5.200"/>
<ellipse cx="1191" cy="242.500" rx="74.500" ry="64" fill="none" stroke="#f2842b" stroke-width="4"/>
</svg>

<div class="abs" style="left:74px;top:709px;width:1048px;height:3px;background:#2e2e2e"></div>
</body>
</html>
